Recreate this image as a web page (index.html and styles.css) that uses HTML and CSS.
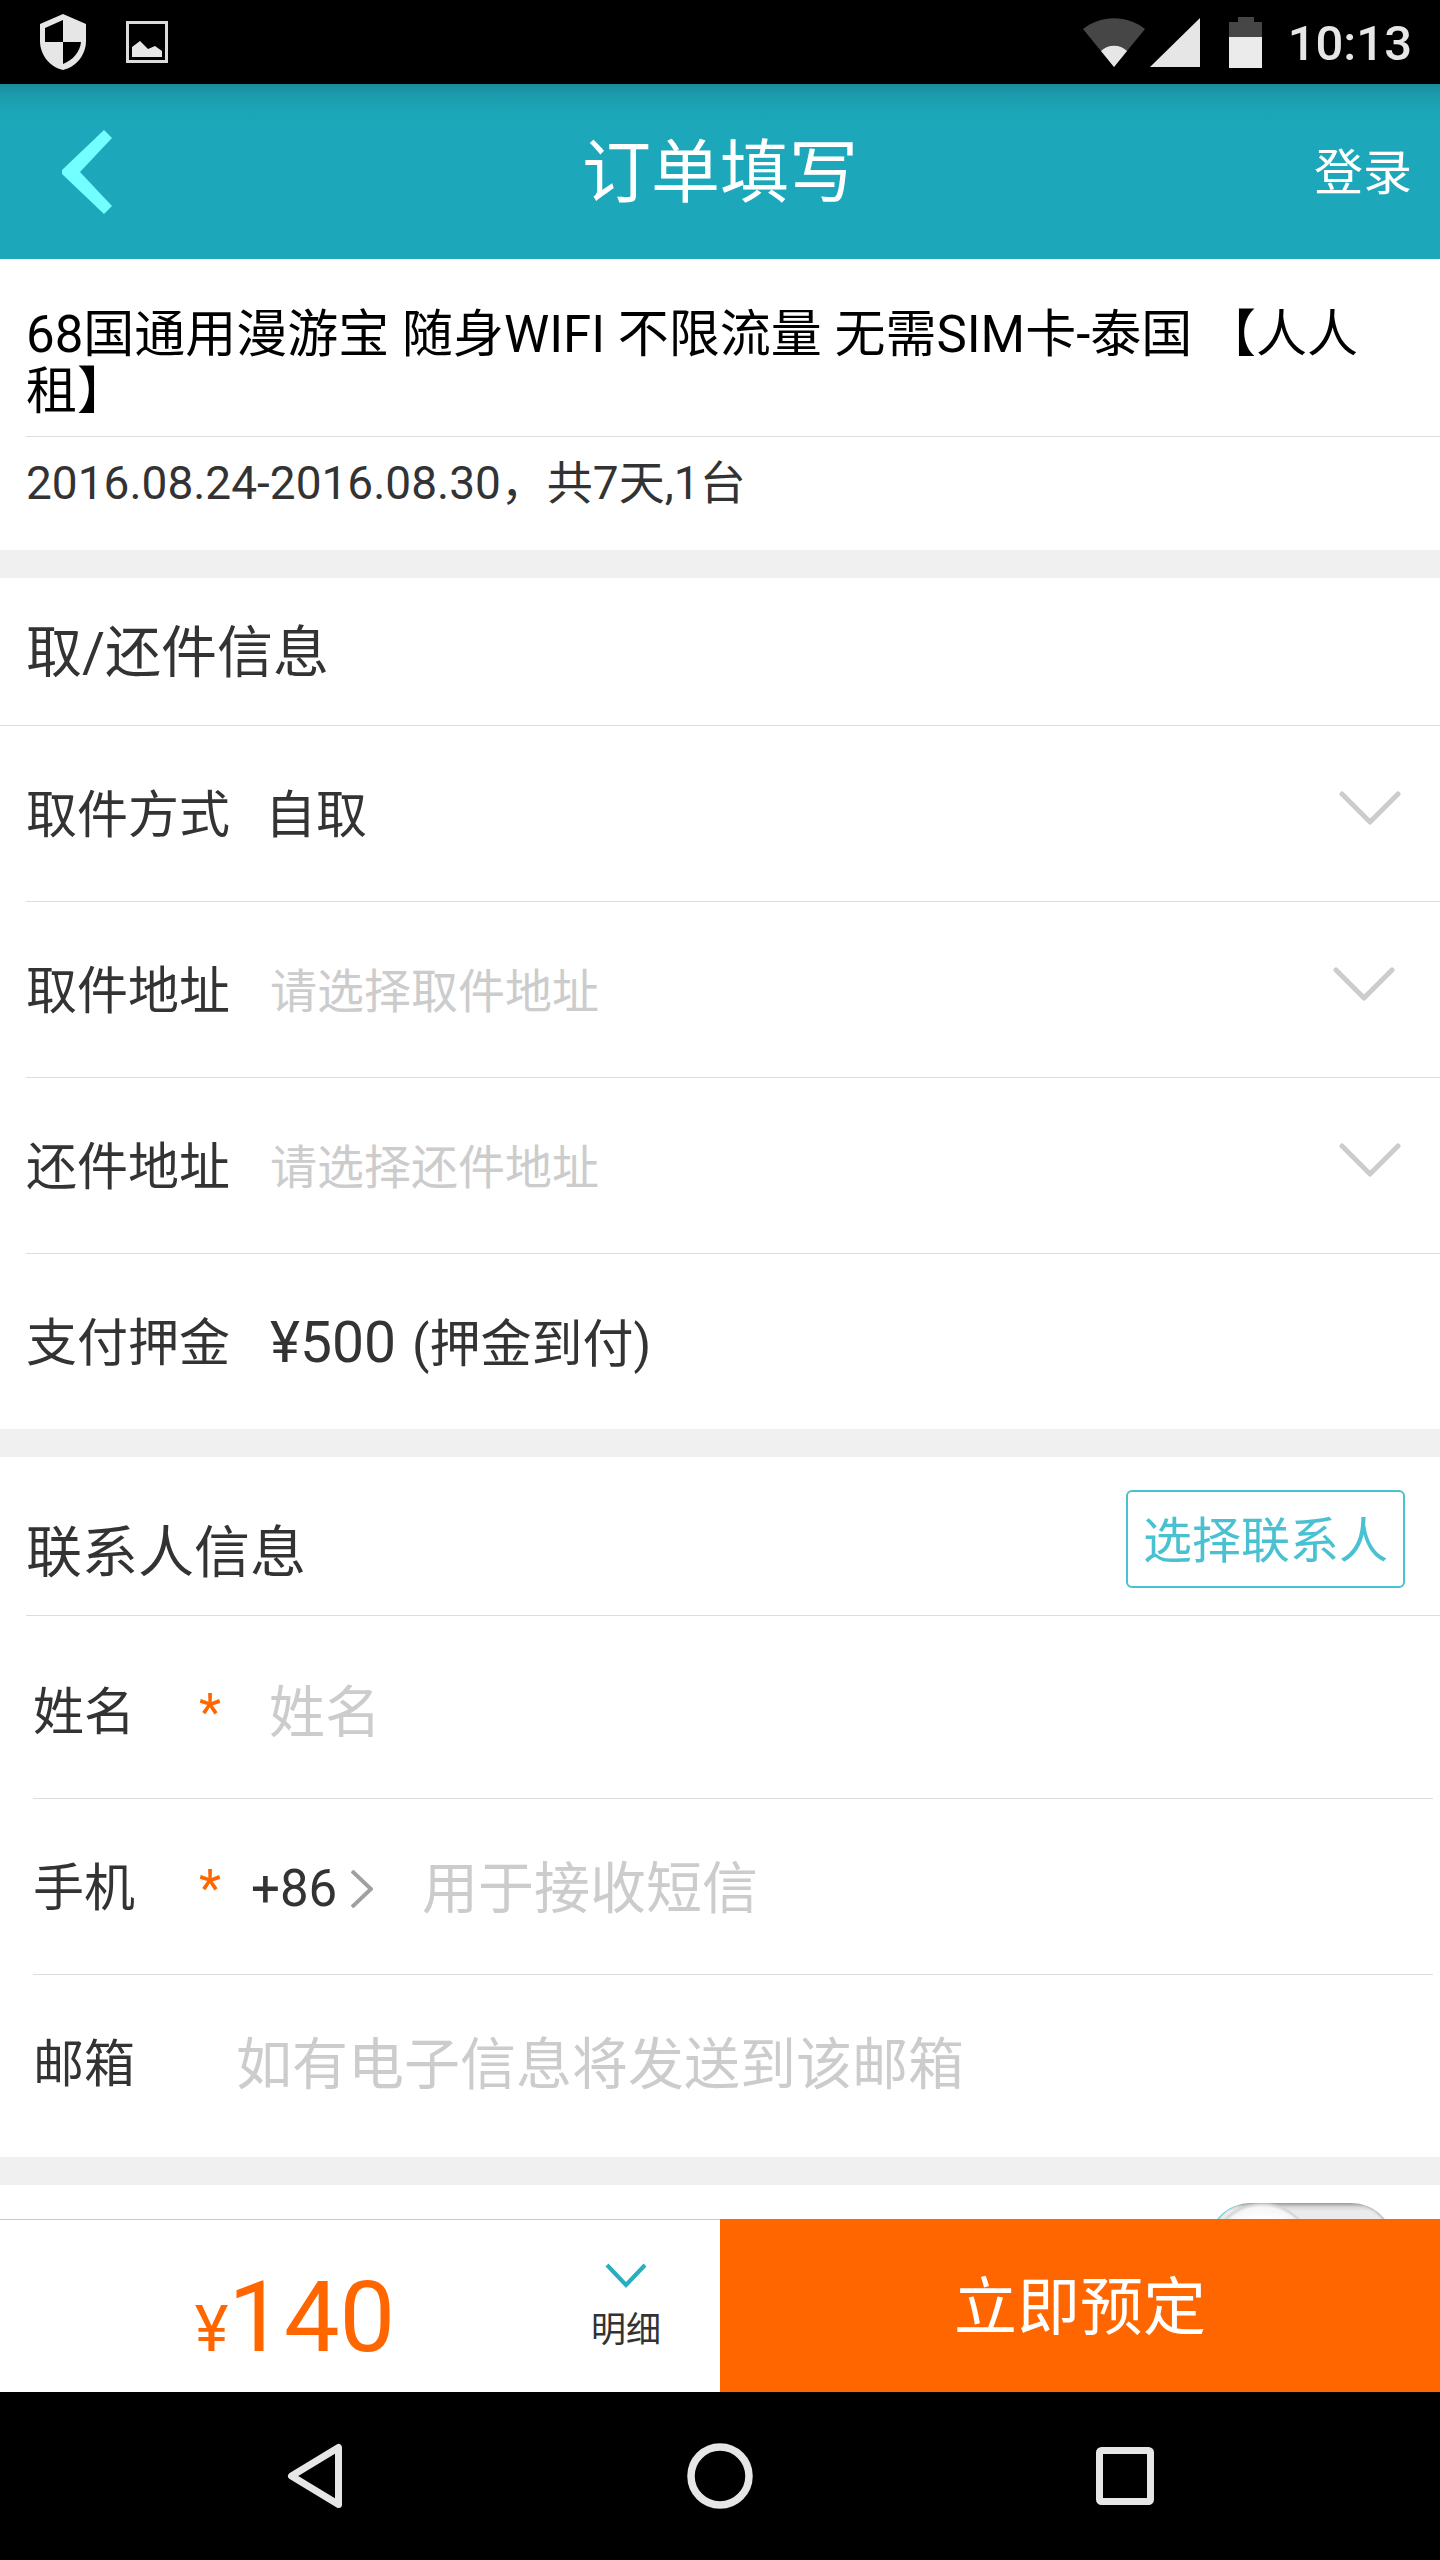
FILE: index.html
```html
<!DOCTYPE html>
<html lang="zh-CN">
<head>
<meta charset="utf-8">
<meta name="viewport" content="width=device-width, initial-scale=1">
<title>订单填写</title>
<link rel="stylesheet" href="styles.css">
</head>
<body>
<div class="app">
  <div class="status-bar">
    <svg class="status-shield" width="46" height="56" viewBox="0 0 46 56" aria-hidden="true">
      <path fill="#e6e6e6" fill-rule="evenodd" d="M23 0 46 10V27C46 41 36 53 23 56 10 53 0 41 0 27V10ZM23 6 5 14V28H23ZM23 28V50C33 46 40 38 41 28Z"/>
    </svg>
    <svg width="42" height="42" viewBox="0 0 42 42" aria-hidden="true">
      <rect x="1.5" y="1.5" width="39" height="39" fill="none" stroke="#dcdcdc" stroke-width="3"/>
      <path fill="#e6e6e6" d="M6 26 14 20 22 28 29 25 36 30V36H6Z"/>
    </svg>
    <div class="status-right">
      <svg class="status-wifi" width="62" height="49" viewBox="0 0 62 49" aria-hidden="true">
        <path fill="#464646" d="M31 49 0 11C18-3.500 44-3.500 62 11Z"/>
        <path fill="#e6e6e6" d="M31 49 18 33C25 26 37 26 44 33Z"/>
      </svg>
      <svg class="status-signal" width="50" height="49" viewBox="0 0 50 49" aria-hidden="true">
        <path fill="#e6e6e6" d="M50 0V49H0Z"/>
      </svg>
      <svg class="status-battery" width="33" height="51" viewBox="0 0 33 51" aria-hidden="true">
        <path fill="#464646" d="M9 0H25V5H33V20H0V5H9Z"/>
        <path fill="#ebebeb" d="M0 20H33V51H0Z"/>
      </svg>
      <span class="clock">10:13</span>
    </div>
  </div>

  <header class="header">
    <button class="header-back" type="button" aria-label="返回">
      <svg width="50" height="84" viewBox="0 0 50 84" aria-hidden="true">
        <path fill="#73ffff" d="M42 0 50 8 18 42 50 76 42 84 0 44V40Z"/>
      </svg>
    </button>
    <h1 class="header-title">订单填写</h1>
    <a class="header-login" href="#login">登录</a>
  </header>

  <main class="content">
    <section class="card product">
      <h2 class="product-name">68国通用漫游宝 随身WIFI 不限流量 无需SIM卡-泰国 【人人租】</h2>
      <p class="product-dates">2016.08.24-2016.08.30，共7天,1台</p>
    </section>

    <section class="card">
      <h2 class="card-title">取/还件信息</h2>
      <div class="row">
        <label class="row-label" for="method">取件方式</label>
        <select class="row-select" id="method"><option>自取</option></select>
        <svg class="row-arrow" width="62" height="34" viewBox="0 0 62 34" aria-hidden="true"><path d="M3 3 31 31 59 3"/></svg>
      </div>
      <div class="row row-inner">
        <label class="row-label" for="pickup">取件地址</label>
        <select class="row-select row-select-empty" id="pickup"><option>请选择取件地址</option></select>
        <svg class="row-arrow" width="62" height="34" viewBox="0 0 62 34" aria-hidden="true"><path d="M3 3 31 31 59 3"/></svg>
      </div>
      <div class="row">
        <label class="row-label" for="return">还件地址</label>
        <select class="row-select row-select-empty" id="return"><option>请选择还件地址</option></select>
        <svg class="row-arrow" width="62" height="34" viewBox="0 0 62 34" aria-hidden="true"><path d="M3 3 31 31 59 3"/></svg>
      </div>
      <div class="row">
        <span class="row-label">支付押金</span>
        <span class="deposit"><span class="deposit-amount">¥500</span>(押金到付)</span>
      </div>
    </section>

    <section class="card">
      <div class="contact-head">
        <h2 class="contact-title">联系人信息</h2>
        <button class="contact-pick" type="button">选择联系人</button>
      </div>
      <div class="fields">
        <div class="field">
          <label class="field-label" for="name">姓名</label>
          <span class="field-required field-required-wide">*</span>
          <input class="field-input" id="name" type="text" placeholder="姓名">
        </div>
        <div class="field">
          <label class="field-label" for="phone">手机</label>
          <span class="field-required">*</span>
          <button class="field-code" type="button">+86
            <svg width="22" height="38" viewBox="0 0 22 38" aria-hidden="true"><path d="M1 1 20 19 1 37" fill="none" stroke="#a0a0a0" stroke-width="4"/></svg>
          </button>
          <input class="field-input" id="phone" type="tel" placeholder="用于接收短信">
        </div>
        <div class="field">
          <label class="field-label field-label-wide" for="email">邮箱</label>
          <input class="field-input" id="email" type="email" placeholder="如有电子信息将发送到该邮箱">
        </div>
      </div>
    </section>

    <section class="card extras">
      <input class="switch" type="checkbox" aria-label="发票">
    </section>
  </main>

  <footer class="order-bar">
    <div class="order-summary">
      <p class="price"><span class="price-unit">¥</span>140</p>
      <button class="detail" type="button">
        <svg width="42" height="25" viewBox="0 0 42 25" aria-hidden="true"><path d="M2 2 21 22 40 2" fill="none" stroke="#26afc0" stroke-width="4"/></svg>
        明细
      </button>
    </div>
    <button class="submit" type="submit">立即预定</button>
  </footer>

  <nav class="system-nav">
    <button class="system-key" type="button" aria-label="后退">
      <svg width="66" height="66" viewBox="0 0 66 66" aria-hidden="true"><path d="M56.500 4.500V61.500L9.500 33Z" fill="none" stroke="#e6e6e6" stroke-width="7" stroke-linejoin="round"/></svg>
    </button>
    <button class="system-key" type="button" aria-label="主页">
      <svg width="66" height="66" viewBox="0 0 66 66" aria-hidden="true"><circle cx="33" cy="33" r="29" fill="none" stroke="#e6e6e6" stroke-width="7.500"/></svg>
    </button>
    <button class="system-key" type="button" aria-label="最近任务">
      <svg width="66" height="66" viewBox="0 0 66 66" aria-hidden="true"><rect x="7.500" y="7.500" width="51" height="51" rx="2" fill="none" stroke="#e6e6e6" stroke-width="7"/></svg>
    </button>
  </nav>
</div>
</body>
</html>
```
FILE: styles.css
```css
* {
  box-sizing: border-box;
}

body {
  margin: 0;
  background: #fff;
  color: #333;
  font-family: Roboto, "Noto Sans CJK SC", sans-serif;
  font-size: 51px;
  line-height: 60px;
}

h1,
h2,
p {
  margin: 0;
  font-weight: 400;
}

button,
input,
select {
  margin: 0;
  padding: 0;
  border: 0;
  background: none;
  color: inherit;
  font: inherit;
  appearance: none;
}

svg {
  display: block;
  flex: none;
}

.app {
  display: flex;
  flex-direction: column;
  height: 100vh;
}

/* Status bar */

.status-bar {
  flex: none;
  display: flex;
  align-items: center;
  height: 84px;
  padding: 0 28px 0 40px;
  background: #000;
  color: #e6e6e6;
}

.status-shield {
  margin-right: 40px;
}

.status-right {
  display: flex;
  align-items: center;
  margin-left: auto;
}

.status-signal {
  margin: 0 29px 0 5px;
}

.status-battery {
  margin-right: 26px;
}

.clock {
  padding-top: 4px;
  font-size: 49px;
  font-weight: 500;
}

/* Header */

.header {
  flex: none;
  display: grid;
  grid-template-columns: 1fr auto 1fr;
  align-items: center;
  height: 175px;
  padding: 0 28px;
  background: linear-gradient(#1a8c9b, #1b9bac 10px, #1ba4b6 24px, #1ca8ba 40px);
  color: #fff;
}

.header-back {
  justify-self: start;
  margin-left: 34px;
}

.header-title {
  padding-top: 4px;
  font-size: 69px;
  line-height: 80px;
}

.header-login {
  justify-self: end;
  padding-top: 4px;
  color: inherit;
  font-size: 49px;
  text-decoration: none;
}

/* Scrolling content */

.content {
  flex: 1;
  min-height: 0;
  overflow: hidden;
  background: #f0f0f0;
}

.card {
  margin-bottom: 28px;
  background: #fff;
}

.product {
  padding: 47px 0 37px 26px;
}

.product-name {
  padding-bottom: 16px;
  border-bottom: 1px solid #ddd;
  color: #000;
  font-size: 51px;
  line-height: 57px;
  text-spacing-trim: space-all;
}

.product-dates {
  padding-top: 16px;
  font-size: 46px;
}

.card-title {
  padding: 45px 26px 42px;
  border-bottom: 1px solid #ddd;
  font-size: 56px;
}

.row {
  display: flex;
  align-items: center;
  height: 176px;
  margin-left: 26px;
  padding-top: 4px;
  padding-right: 39px;
  border-bottom: 1px solid #ddd;
}

.row-inner {
  padding-right: 45px;
}

.row:last-child {
  height: 175px;
  border-bottom: 0;
}

.row-label {
  flex: none;
  width: 239px;
}

.row-select {
  flex: 1;
  min-width: 0;
  height: 100%;
}

.row-select-empty {
  padding-left: 5px;
  color: #ccc;
  font-size: 47px;
}

.row-arrow {
  margin-bottom: 16px;
  fill: none;
  stroke: #ccc;
  stroke-width: 5;
  stroke-linecap: round;
  stroke-linejoin: round;
}

.deposit {
  padding-left: 5px;
}

.deposit-amount {
  margin-right: 16px;
  font-size: 57px;
}

/* Contact form */

.contact-head {
  display: flex;
  align-items: center;
  justify-content: space-between;
  margin-left: 26px;
  padding: 33px 35px 27px 0;
  border-bottom: 1px solid #ddd;
}

.contact-title {
  padding-top: 28px;
  font-size: 56px;
}

.contact-pick {
  height: 98px;
  padding: 5px 15px 0;
  border: 2px solid #4ac1d1;
  border-radius: 6px;
  color: #4ac1d1;
  font-size: 49px;
}

.fields {
  padding: 7px 7px 6px 33px;
}

.field {
  display: flex;
  align-items: center;
  height: 176px;
  padding-top: 4px;
  border-bottom: 1px solid #ddd;
}

.field:last-child {
  border-bottom: 0;
}

.field-label {
  flex: none;
  width: 166px;
}

.field-label-wide {
  width: 203px;
}

.field-required {
  flex: none;
  width: 52px;
  color: #f60;
}

.field-required-wide {
  width: 70px;
}

.field-code {
  flex: none;
  display: flex;
  align-items: center;
  gap: 14px;
  width: 171px;
}

.field-input {
  flex: 1;
  min-width: 0;
  height: 100%;
  font-size: 56px;
}

.field-input::placeholder {
  color: #ccc;
  opacity: 1;
}

/* Switch row */

.extras {
  display: flex;
  justify-content: flex-end;
  height: 176px;
  margin-bottom: 0;
  padding: 18px 45px;
}

.switch {
  width: 188px;
  height: 88px;
  border-radius: 44px;
  background:
    radial-gradient(circle at 55px 52px, #fff 36px, #f6f6f6 48px, #d4d4d4 51px, transparent 53px),
    linear-gradient(#999, #d8d8d8 4px, #ebebeb 8px);
  box-shadow: inset 3px 0 1px -1px #4ac1d1, inset -3px 0 3px -1px #aaa;
}

/* Order bar */

.order-bar {
  flex: none;
  display: grid;
  grid-template-columns: 1fr 1fr;
  height: 173px;
}

.order-summary {
  display: flex;
  padding-right: 58px;
  border-top: 1px solid #c8c8cc;
  background: #fff;
}

.price {
  flex: 1;
  padding-top: 37px;
  color: #f60;
  font-size: 99px;
  line-height: 120px;
  text-align: center;
}

.price-unit {
  font-size: 64px;
}

.detail {
  display: flex;
  flex-direction: column;
  align-items: center;
  gap: 21px;
  width: 72px;
  padding-top: 43px;
  font-size: 35px;
  line-height: 44px;
}

.submit {
  padding-top: 5px;
  background: #f60;
  color: #fff;
  font-size: 63px;
}

/* System navigation */

.system-nav {
  flex: none;
  display: flex;
  align-items: center;
  justify-content: center;
  gap: 339px;
  height: 168px;
  background: #000;
}
```
